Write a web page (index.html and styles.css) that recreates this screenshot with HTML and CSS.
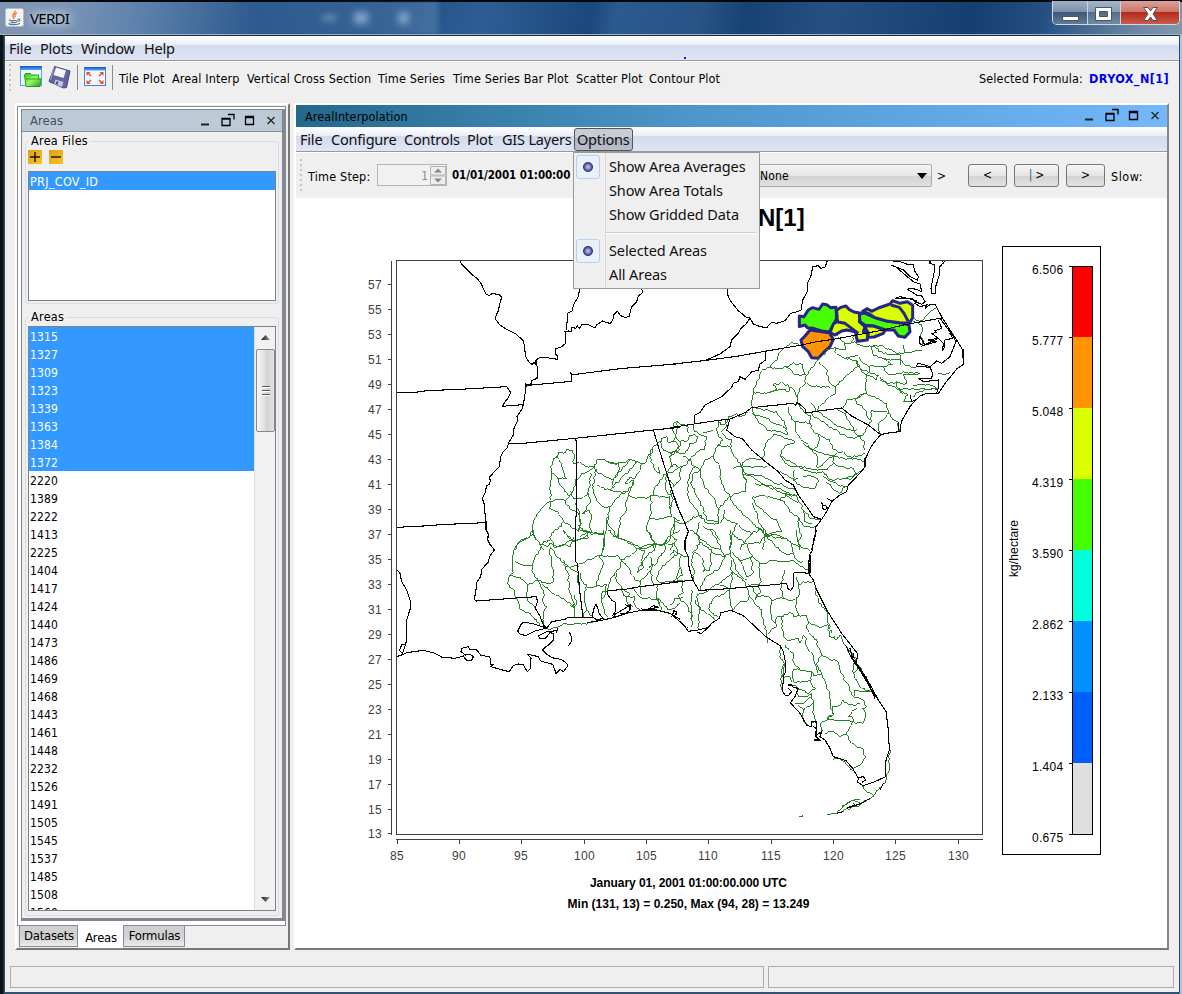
FILE: index.html
```html
<!DOCTYPE html>
<html lang="en">
<head>
<meta charset="utf-8">
<title>VERDI</title>
<link rel="stylesheet" href="styles.css">
<script src="map.js" defer></script>
</head>
<body>
<div class="frame">
  <header class="titlebar">
    <svg class="java" width="19" height="19" viewBox="0 0 19 19"><rect x=".5" y=".5" width="18" height="18" rx="2" fill="#f3f3f1" stroke="#b9bdc3"/><path d="M10 2.5C11 5 6.500 6 8 8.500C9 10 9.500 10 8.500 11M12 5C9 6.500 9.500 7.500 10.500 9" fill="none" stroke="#e08335" stroke-width="1.400"/><path d="M4.500 11.500C3 13 12 13 13 11.500M13 11C16 10.500 15 13.500 12.500 13.500M5.500 13.700C7 14.700 10 14.700 12 13.700M3.500 15.500C5 17 13 17 15 15.300" fill="none" stroke="#54758f" stroke-width="1.100"/></svg>
    <span class="app-name">VERDI</span>
    <div class="ghost"><i class="g1"></i><i class="g2"></i><i class="g3"></i></div>
    <div class="winbtns">
      <span class="wb"><svg width="34" height="24"><rect x="9.500" y="15.500" width="16" height="4" fill="#fff" stroke="#4b5563"/></svg></span>
      <span class="wb wmax"><svg width="32" height="24"><path d="M7.500 6.500h16v13h-16zM11.500 10.500v5h8v-5z" fill="#fff" stroke="#4b5563" fill-rule="evenodd"/></svg></span>
      <span class="wb close"><svg width="58" height="24"><path d="M22.500 6.500h4.500l2.500 3.500 2.500-3.500h4.500l-4.500 6.500 4.500 6.500h-4.500l-2.500-3.500-2.500 3.500h-4.500l4.500-6.500z" fill="#fff" stroke="#5d4a50"/></svg></span>
    </div>
  </header>
  <div class="client">
    <nav class="menubar main"><span>File</span><span>Plots</span><span>Window</span><span>Help</span><b class="speck"></b></nav>
    <div class="toolbar">
      <i class="grip"></i>
      <svg class="tools" width="92" height="26" viewBox="20 64 92 26">
        <defs><linearGradient id="blue" x1="0" y1="0" x2="0" y2="1"><stop offset="0" stop-color="#1156cf"/><stop offset="1" stop-color="#58a4f6"/></linearGradient><linearGradient id="leaf" x1="0" y1="0" x2="1" y2="1"><stop offset="0" stop-color="#35c21f"/><stop offset=".5" stop-color="#9df36d"/><stop offset="1" stop-color="#1aa50c"/></linearGradient></defs>
        <rect x="20.500" y="66.500" width="21" height="19" fill="#eef7ff" stroke="#57a0ec"/><rect x="20" y="66" width="22" height="4" fill="url(#blue)"/>
        <path d="M24.500 75l1-1.500h5l1 1.500h7v4h2.500l-1 7.500h-14z" fill="url(#leaf)" stroke="#24a015"/><path d="M26 79h15" stroke="#26b113"/>
        <path d="M54.500 66.500l15.500 4.500-3.500 16.500-3 .5-14.500-6.500 1-3z" fill="#6264a0" stroke="#454478"/><path d="M56 67.500l10 3-2.500 7.500-10-3z" fill="#f5f6fb"/><path d="M55.500 79.500l8 2.500-1.500 5-8-3z" fill="#c4c5de"/><path d="M57.500 81.500l-1 3" stroke="#484982" stroke-width="2"/><path d="M54 67l-3.500 13" stroke="#aaaad0"/>
        <path d="M77.500 65v25" stroke="#8b8b8b"/>
        <rect x="84.500" y="67.500" width="21" height="18" fill="#f3f8ff" stroke="#3f85dc"/><rect x="84" y="67" width="22" height="3.500" fill="url(#blue)"/>
        <path d="M86.500 72h4l-1.300 1.300 2.300 2.200-1 1-2.200-2.300-1.800 1.800zM103.500 72h-4l1.300 1.300-2.300 2.200 1 1 2.200-2.300 1.800 1.800zM86.500 84h4l-1.300-1.300 2.300-2.200-1-1-2.200 2.300-1.800-1.800zM103.500 84h-4l1.300-1.300-2.300-2.200 1-1 2.200 2.300 1.800-1.800z" fill="#ef4a1c"/>
      </svg>
      <i class="vsep"></i>
      <div class="plotbtns"><span>Tile Plot</span><span>Areal Interp</span><span>Vertical Cross Section</span><span>Time Series</span><span>Time Series Bar Plot</span><span>Scatter Plot</span><span>Contour Plot</span></div>
      <div class="formula"><span>Selected Formula:</span><b>DRYOX_N[1]</b></div>
    </div>
    <main class="desk">
      <section class="left">
        <div class="tabpane">
          <div class="dock">
            <div class="docktitle"><span>Areas</span>
              <svg class="wi" width="76" height="14"><path d="M1 11.500h8" stroke="#142814" stroke-width="2"/><path d="M22 5.500h8v7h-8zM22 6h8M28 1.500h6v5M45.500 3.500h8v8h-8zM45 4.500h9" fill="none" stroke="#000" stroke-width="1.300"/><path d="M67.500 4l7 7m0-7l-7 7" stroke="#142814" stroke-width="1.200"/></svg>
            </div>
            <div class="dockbody">
              <fieldset class="files"><legend>Area Files</legend>
                <div class="pm"><svg width="14" height="14"><path d="M2 7h10M7 2v10" stroke="#111" stroke-width="1.400"/></svg><svg width="14" height="14"><path d="M2 7h10" stroke="#111" stroke-width="1.400"/></svg></div>
                <div class="list filelist"><div class="sel">PRJ_COV_ID</div></div>
              </fieldset>
              <fieldset class="areas"><legend>Areas</legend>
                <div class="list arealist">
                  <div class="rows">
                    <div class="sel">1315</div><div class="sel">1327</div><div class="sel">1309</div><div class="sel">1323</div><div class="sel">1339</div><div class="sel">1363</div><div class="sel">1384</div><div class="sel">1372</div>
                    <div>2220</div><div>1389</div><div>2222</div><div>1413</div><div>2225</div><div>1404</div><div>1417</div><div>1424</div><div>1440</div><div>1473</div><div>1486</div><div>1469</div><div>1468</div><div>1443</div><div>1461</div><div>1448</div><div>2232</div><div>1526</div><div>1491</div><div>1505</div><div>1545</div><div>1537</div><div>1485</div><div>1508</div><div>1560</div>
                  </div>
                  <div class="scroll">
                    <svg width="19" height="22"><defs><linearGradient id="arr"><stop offset="0" stop-color="#111"/><stop offset="1" stop-color="#999"/></linearGradient></defs><path d="M5 13l4.500-5 4.500 5z" fill="url(#arr)"/></svg>
                    <div class="thumb"><i></i><i></i><i></i></div>
                    <svg class="down" width="19" height="22"><path d="M5 9h9l-4.500 5z" fill="url(#arr)"/></svg>
                  </div>
                </div>
              </fieldset>
            </div>
          </div>
        </div>
        <div class="tabs"><span>Datasets</span><span class="on">Areas</span><span>Formulas</span></div>
      </section>
      <section class="right">
        <div class="innertitle"><span>ArealInterpolation</span>
          <svg class="wi" width="76" height="14"><path d="M1 11.500h8" stroke="#142814" stroke-width="2"/><path d="M22 5.500h8v7h-8zM22 6h8M28 1.500h6v5M45.500 3.500h8v8h-8zM45 4.500h9" fill="none" stroke="#000" stroke-width="1.300"/><path d="M67.500 4l7 7m0-7l-7 7" stroke="#142814" stroke-width="1.200"/></svg>
        </div>
        <nav class="menubar inner"><span>File</span><span>Configure</span><span>Controls</span><span>Plot</span><span>GIS Layers</span><span class="open">Options</span></nav>
        <div class="controls">
          <i class="grip"></i><span class="tslabel">Time Step:</span>
          <div class="spinner"><span>1</span><svg width="16" height="19"><path d="M.5.500h15v8.500h-15zM.5 10h15v8.500h-15z" fill="#eee" stroke="#b5b5b8"/><path d="M4 6.500h8l-4-4zM4 12.500h8l-4 4z" fill="#888"/></svg></div>
          <b class="date">01/01/2001 01:00:00</b>
          <div class="combo"><span>None</span><svg width="10" height="6"><path d="M0 0h10l-5 6z"/></svg></div>
          <span class="gt">&gt;</span>
          <button class="b1">&lt;</button><button class="b2"><i>|</i>&gt;</button><button class="b3">&gt;</button>
          <span class="slow">Slow:</span>
        </div>
        <svg class="plot" width="871" height="750" viewBox="296 198 871 750">
          <text class="ttl" x="758" y="226">N[1]</text>
          <g class="polys" transform="translate(670 250) scale(.33333)">
            <path fill="#45ff00" d="M388 198L402 200 415 180 428 173 447 178 458 162 470 164 482 173 498 172 500 205 490 225 478 246 455 243 430 235 412 233 405 225 388 230z"/>
            <path fill="#ff9400" d="M420 240L440 243 478 248 490 268 480 290 460 308 445 325 425 323 415 305 398 290 393 270 405 258z"/>
            <path fill="#d9ff00" d="M500 181L512 172 528 168 537 178 552 186 574 190 568 215 585 230 580 245 595 252 592 270 562 274 556 245 530 240 515 243 495 255 480 248 490 222 502 214z"/>
            <path fill="none" d="M500 215L525 220 545 235 565 250"/>
            <path fill="#45ff00" d="M568 195L580 188 615 203 650 213 690 218 717 225 720 245 705 262 685 258 672 240 645 240 610 228 585 226 570 215z"/>
            <path fill="#d9ff00" d="M578 184L592 176 605 184 625 174 660 162 668 152 690 160 712 155 728 166 728 203 718 220 690 218 650 213 615 203 598 192z"/>
            <path fill="none" d="M663 165L688 172 702 190 715 215"/>
            <path fill="#d9ff00" d="M583 228L610 228 645 240 640 250 612 261 592 262 595 250z"/>
          </g>
          <g class="ws" transform="translate(380 250) scale(.33333)">
            <path d="M512 750L510 720 512 650 521 625 533 617 537 607 552 610 560 598 578 600 584 622 580 640 598 635 612 645 642 650 651 630 668 627 680 635 715 639 745 630 760 632 772 635 785 640 795 640 805 615 820 590 835 577 845 565 860 560 866 580 880 573 885 565 892 515"/>
            <path d="M533 617L545 640 560 685 540 686 530 680 512 665M530 680L548 712 568 738 556 752 527 748 512 755M568 738L580 720 585 690 605 670 625 665 645 650M570 722L580 745 610 742 624 728 632 670M642 650L650 660 643 690 641 730 650 750 665 768 688 770 702 755 720 735 740 725 762 693 745 700 735 700 750 680 765 685 785 640M645 660L670 675 700 690 703 710 690 720 675 720 650 705M668 627L700 640 715 639 718 660 705 680 700 690M690 720L720 725 738 725M750 632L720 665 705 685M772 635L745 670 720 690 695 715M762 693L745 733 738 755 740 775 735 790 722 800 720 825 717 865M624 728L632 755 615 790 605 790 630 780 634 800 630 835 643 850 672 855M688 770L683 815 700 840 717 865M683 800L680 840 672 870 672 900M745 733L775 743 810 738 820 735 825 710 840 690 850 675 860 673M820 735L845 740 870 740 875 800 835 808 808 808 812 770 812 738M808 808L798 830 810 850 825 880 828 895M720 865L750 875 790 895 825 880 848 885 862 865 880 850 885 820 880 800 900 812M860 673L858 720 875 740M845 570L850 600 880 605 893 595 892 580 875 572M820 590L812 635 840 670 835 650M860 673L895 655M880 605L868 620 875 650 862 665"/>
            <path d="M512 755L490 770 470 800 458 830 460 850 445 865 415 880 405 900M512 755L508 775 535 787 550 815 545 830 515 850 512 870 480 885 463 860 458 840M556 752L562 765 595 790 605 820 595 845 575 835 550 815M550 840L580 870 605 865 623 850 622 845 600 840 598 800 586 760M580 870L570 890 545 885 525 895 512 870M480 885L490 900M595 825L625 845 640 855M625 845L625 865 590 868"/>
          </g>
          <g class="ws" transform="translate(670 250) scale(.33333)">
            <path d="M728 205L755 212 765 200 780 185 798 175M730 215L755 225 758 240 750 255 760 270 755 290M388 285L365 278 330 305 322 330 300 352 275 362 270 385 255 410 247 440 248 473M300 352L330 355 347 350 370 338 398 345 407 375 390 378 370 370 347 352M445 330L430 350 410 375 407 400 385 430 380 460M445 335L472 360 480 400 495 410 497 430 465 455 440 485M410 400L440 408 480 412M250 425L290 430 320 418 308 405 335 395 355 405 357 425 330 418 300 430M355 405L375 425 385 445M445 330L470 300 495 290 525 300 525 280 555 275 570 285 605 290 630 285M495 290L500 310 525 325 560 330 570 355 590 378 590 430 560 445 530 450 520 475M525 325L560 315 590 345 640 350 650 370 685 372 700 365 745 365M560 330L565 350 545 365 520 390 495 410M570 355L625 375 620 390 590 378 600 350M605 290L610 315 640 325 670 345 640 350M640 325L690 330 705 345 745 350M630 285L665 300 690 315 690 345M610 285L640 310 700 310 755 300M630 380L650 400 680 395 710 400 700 375 750 370M680 395L685 415 725 415 760 415 805 417 780 405 730 405M700 430L655 405 630 390M590 430L620 445 650 462 655 490 685 515 690 545M655 490L640 510 625 520 632 554M590 430L555 448 585 480 600 510 605 480 650 485M790 417L750 425 728 440M685 415L715 435 700 455 725 452M805 370L840 367M555 255L545 275M500 255L525 280M700 285L705 310"/>
            <path d="M248 473L250 490 290 505 330 525 350 535 352 555 320 545 290 540 265 515 245 490M248 473L290 478 320 485 345 515 350 535M355 470L360 495 375 515 380 550 410 580 440 615 445 655M385 460L405 490 422 495 420 520 400 518 375 515M422 490L460 515 500 540 530 560 550 565 570 558 585 580 585 600M500 475L525 490 550 530 560 555 580 555 590 530 605 510M440 485L425 460M420 520L430 545 455 560 480 570 490 600 520 605 540 620 585 610M445 480L465 500 510 530 560 540M400 580L430 600 460 610 490 615 492 640 470 660 430 660 385 650 330 620 335 600 350 585 375 575M375 575L350 565 310 555 285 590 285 615 270 630 240 625 210 650 190 655M335 620L345 640 385 650 420 665 460 665 485 690 520 685 555 675 580 655M445 655L475 625 500 610M430 600L445 580 445 555M490 615L520 625 560 625 585 635M490 640L520 650 550 655 560 670 540 690 520 685M460 680L500 700 530 710 510 730 485 715 470 695M375 660L370 690 395 710 435 715 445 695 430 680 400 680M330 665L355 680 385 685M215 650L225 670 270 675 300 690 340 705 375 720M210 645L240 650 290 650M230 695L215 670 250 680 290 710 330 715 380 738M255 700L300 705 345 730 385 760M330 750L350 730 380 738 410 790 425 805 455 808M330 750L345 755 360 785 385 800 405 830 440 830M400 780L405 815 425 820M248 740L280 735 310 745 330 750M248 740L255 760 290 790 320 810 335 845 290 855 265 815 248 760M140 540L145 515 160 525 175 500 200 490 210 500 235 485M165 510L170 530 155 545M140 540L145 560 160 570 145 585 130 615 150 650 155 700 180 740 145 780 148 820 110 810 80 740 60 700 70 670 90 660 105 630 130 620M145 585L180 590 210 640 230 695 225 725 180 740M155 550L185 570 185 590M90 660L100 700 130 740 150 780M75 650L55 690 55 740 80 780 95 805M180 740L200 770 245 815 280 845M165 780L160 800 200 820 245 850 270 835 290 855 280 900M0 620L15 605 45 610 60 580 80 575 85 560 60 555 50 575 30 575 28 600 0 610M10 520L8 540 30 575M10 520L25 515 55 530 55 550M72 522L75 545 110 560 105 600 85 605 60 630 40 620M0 650L10 645 35 650 60 630 75 650 90 660M35 650L30 690 10 710 0 690M100 548L130 540M0 720L10 750 0 780M15 815L40 820 70 800 95 795 105 815 148 820M90 815L80 850 95 870 150 900M100 830L130 840 150 870M150 820L165 790M15 815L0 850 20 870 0 900M200 820L185 870 180 900M250 850L225 875 210 900M290 855L350 865 390 890M385 800L390 840 395 860 385 880 390 900"/>
          </g>
          <g class="ws" transform="translate(380 530) scale(.33333)">
            <path d="M458 0L450 20 420 35 405 55 400 70 400 130 385 145 382 160 405 185 410 205 425 240 450 250 470 270 485 290 500 296 530 293 550 280 580 283 640 276M458 0L480 42 505 48 510 40 530 50 575 30 582 20M405 95L430 105 457 105 465 80 480 60 480 42M457 105L463 135 475 150 500 160 520 155 515 110 508 60 515 50M390 135L420 142 443 165 475 150M443 165L440 200 465 235M475 150L495 195 485 210 500 230 490 250 495 290M515 55L540 85 570 115 595 130 598 165M550 90L565 130 570 190 583 220 580 230 545 205 515 190 485 160M555 110L585 105 598 110M583 220L585 240 570 225M582 195L590 215 585 262M550 0L575 28 590 40M600 130L605 150 620 165 615 200 620 240 640 258M620 170L660 168 680 165 675 195 665 215 673 240 685 262M598 100L620 90 645 80 660 77 672 40 670 0M660 77L670 100 660 130 650 168M660 77L690 80 710 75 725 90 720 115 705 130 690 155 683 182M725 90L745 110 765 150 780 155 815 115 812 80M725 90L770 60 765 50 720 25 700 20 685 0M770 55L795 60 785 90 790 115 770 130M770 55L800 45 825 40 825 60 795 85 775 125M800 0L825 40 860 40 875 15 900 0M860 30L855 60 830 100 800 120M865 45L885 40 895 70 875 85 840 120 830 150 850 158 885 150 900 115M815 115L820 165M710 130L710 155 725 172 730 195 765 200 765 225 780 240M760 172L780 200 835 205 845 240M780 155L785 195M725 172L750 190 740 215 760 230M715 0L715 25M835 205L870 240 900 220M835 165L830 185 840 225M620 240L610 260M683 182L665 190 665 215M600 20L625 5 670 10"/>
          </g>
          <g class="ws" transform="translate(670 530) scale(.33333)">
            <path d="M0 75L12 60 28 70 35 75 30 110 38 135 20 150 50 150M35 75L55 80M65 70L90 35 80 15 60 0M90 35L125 60 125 100 120 120 100 125 100 95 75 65 65 90 75 125 70 150M125 65L165 80 152 60 135 20 120 0M165 80L180 70 180 0M185 10L230 40 245 75 270 100 272 160M180 70L190 95 215 140 230 150M185 65L210 90 245 80 250 130 230 140 205 85M165 80L145 120 105 145 90 180M185 90L185 130 150 160 110 185 80 200 90 235 85 300M190 125L225 155 235 180 245 205 275 240 290 310M270 100L310 90 350 95 370 90 415 120M280 0L290 20 350 75 370 70 360 35 320 15 290 20M290 10L270 40 235 42M380 0L390 45 420 62M370 70L380 90 400 95M345 120L335 170 340 205 305 210 280 195 260 200 245 170M340 205L370 210 385 200 385 165 400 155 430 155M385 165L378 140M380 200L385 255 370 260 360 245 340 260 320 260 320 290 295 310M305 210L300 245 315 280M335 260L340 310 350 330 385 325 390 340 400 315 410 325 410 350 430 375 445 430M385 255L410 255 415 275 445 290 475 285 480 320 495 320 500 330 510 315 530 350 560 385M435 175L445 210 470 245 485 310M415 275L410 295 440 330 455 375 505 395 510 420 520 435 535 465 550 500M455 375L440 400 455 430 480 490 490 555 470 570 455 575 455 605M345 345L370 370 370 395 390 420 425 425 430 435 455 435M390 420L370 420 370 455 420 450 438 475 415 490 385 475 370 465M425 425L425 450M385 475L385 500 410 500 425 490 430 520 400 545 402 575 415 585M375 520L400 520 425 500M430 520L435 575 425 580M400 540L385 525M335 350L330 380 345 400 340 430 335 440 335 480M290 310L295 340M345 400L335 440 360 440 365 455M490 555L470 565 550 575 580 580 585 545 575 535 590 530 570 505 550 500 555 480 605 485M490 555L485 530 500 530 520 510 540 525 570 520M550 575L545 560 535 560 545 545 560 535M550 575L540 590 530 615 510 620 490 605 465 610M530 615L545 640 580 658 585 685 570 705 550 715M555 385L550 430 560 450 570 470 600 485M550 430L570 410 590 440M490 690L500 685 525 695 550 722M660 660L660 720 645 760 610 800 570 825 500 852M575 767L610 797M570 820L550 810 525 825 500 850 472 853M570 810L545 812 520 830M388 859L398 859 398 856M125 220L115 235 145 260M190 125L180 190 187 240M150 165L180 175 160 195 130 205 125 220M235 165L270 160 270 190 255 210M187 240L210 215 235 210 235 200M38 150L40 190 25 200 50 225 70 260 60 265M65 180L65 290M75 210L85 230 125 260 135 270M0 225L15 205 40 200"/>
          </g>
          <g class="bd" transform="translate(380 250) scale(.33333)">
            <path d="M241 32L244 42 262 60 275 73 292 86 303 100 312 120 319 134 328 136 338 130 358 135 365 142 358 165 356 180 347 200 348 210 360 225 378 237 405 250 430 272 434 290 436 318 448 338 456 343 462 338 468 345 468 330 480 322 500 323 532 328 532 318 526 312 528 296 545 290 557 280 555 245 565 243 575 245 575 232 588 235 592 228 598 236 605 224 625 224 645 234 650 224 668 213 680 218 692 220 700 205 700 195 712 184 722 197 735 202 747 200 755 170 770 155 775 138 788 128 785 117M599 117L595 140 580 165 577 182 563 190 562 215 558 225 560 240M468 338L472 350 471 385 455 392 452 405 437 402 438 410 434 440 430 463 427 475 411 500 412 515 402 535 400 555 385 580 383 592 370 605 362 620 358 650 343 665 330 680 328 687 332 690 328 703 319 707 317 725 307 745 312 760 315 790 318 815 318 840 325 850 323 868 330 885 343 898"/>
            <path d="M50 428L115 426 140 422 240 418 380 410 392 428 385 443 372 460 368 469 400 466 430 464M437 406L443 406 575 394 573 370 580 374 720 356 900 341M385 582L440 579 585 565 680 555 820 540 900 532M50 832L150 827 180 824 316 818M583 564L590 574 589 800 586 800 586 900M820 540L838 600 876 720 900 788"/>
          </g>
          <g class="bd" transform="translate(670 250) scale(.33333)">
            <path d="M0 343L110 331 200 319 290 303 395 285 440 275 490 268 640 240 700 225 815 204M173 117L173 135 183 155 205 182 230 203 240 204 250 222 270 230 290 233 305 217 320 220 345 212 362 190 385 184 393 180 398 150 412 125 413 98 424 75 428 50 445 47 452 55 465 52 472 32M240 204L228 222 213 235 205 250 185 270 180 290 150 312 120 325 107 331M287 303L287 330 270 342 265 360 245 366 225 388 210 380 205 395 190 400 185 412 155 440 120 457 105 465 90 487 75 495 73 522M0 533L72 522 145 511 180 507 225 488 245 473 370 460 378 466 380 458 388 461 405 477 408 489 440 484 515 474 545 498 595 525 632 554M180 507L170 540 195 560 217 566 245 600 290 638 325 665 345 690 370 705 385 735 410 770 430 800 455 808M0 703L20 765 43 815 55 845 45 870 44 900"/>
            <path d="M795 163L815 200 840 240 860 270 878 300 880 343 862 355 840 382 825 400 805 430 770 430 750 438 735 452 720 470 705 495 694 515 690 545 660 548 632 554 610 580 598 600 585 630 586 650 560 680 535 705 530 725 510 735 485 755 470 785 455 808 438 830 435 860 425 900M878 300h3v43h-3M686 515v30h-3M583 625v25h4M810 205L825 225 850 260 858 275 840 320 815 340 800 333 780 350 765 345 745 340 738 348 780 352 788 370 785 385 745 385 760 395 805 390 805 415 800 430M720 435L725 455 735 450M805 210L815 235 795 242 800 248 785 250 805 265 775 270 800 275 765 285 750 260 748 280 760 287 790 272 805 265 820 280 818 300 822 295 825 270 848 265 840 250 852 255M675 145L690 140 740 152 735 160 750 170 770 165 765 175 778 165 795 163M668 33L690 35 710 42 730 45 735 65 745 80 742 90 720 80 700 60 675 50 665 45 680 52 700 70 730 95 750 102 755 125 740 118 720 115 712 118 740 135 755 138 765 155 755 163 735 155 725 145 675 145M780 32L780 40 795 45 793 65 788 90 783 115 785 130 795 132 797 110 808 75 810 50 825 32M815 32L822 40M455 755L460 780 473 775 465 765 455 768M470 745L485 752"/>
          </g>
          <g class="bd" transform="translate(380 530) scale(.33333)">
            <path d="M319 0L325 15 323 30 330 42 343 60 328 80 326 95 306 117 302 140 290 157 288 180 283 208 290 213 410 204 470 200 472 215 466 235 480 258 490 285 500 294M586 0V95L592 100 600 190 609 262M683 182L735 178 780 170 900 155M683 182L684 195 695 210 706 217 706 245 697 258M50 118L60 130 65 155 80 180 92 215 92 232 80 270 79 335 68 370 58 362 65 345 76 343M50 380L65 375 80 368 130 361 165 370 185 381 225 385 250 378 258 390 275 391 280 380 270 373 257 375 243 365 245 355 265 350 270 358 290 360 303 376 328 380 333 390 331 405 340 403 332 410 360 418 388 425 400 407 415 402 430 405 442 425 452 415 453 385 443 373 475 380 482 393 518 403 528 430 540 418 550 425 563 408 560 400 543 388 515 383 497 370 488 360 495 352 505 345 520 330 520 310 510 308 497 324 480 325 475 318 500 305 530 302 534 296 528 310M500 294L455 280 430 277 423 283 413 303 420 312 438 317 465 303 500 294 515 275 555 268 565 262 580 263 637 262 640 240 648 222 655 240 658 252 670 265 650 270 640 262M700 265L705 253 735 235 750 225 750 240 735 252 720 250M735 222L745 230M568 305L574 320 574 335 565 347M900 268L870 250 830 240 790 240 740 250 700 263 660 272 620 278M782 236L800 240 820 227 838 232 808 236M878 257L880 245 888 243 890 255"/>
          </g>
          <g class="bd" transform="translate(670 530) scale(.33333)">
            <path d="M57 0L45 35 45 60 55 80 57 110 68 150 87 181M0 157L68 151M87 181L150 178 230 171 290 166 350 160 353 175 362 181 370 170 370 130 378 127 390 127 415 130M440 0L430 30 428 60 418 75 415 130 430 150 440 180 470 240 515 310 562 370 560 400 590 445 625 510 648 545 655 600 658 660 648 690 647 740 610 757 580 767 563 757 565 743 580 740 587 750 575 758M421 75v55M418 100v32M565 745L548 715 528 692 490 680 480 655 465 630 450 620 455 605 435 618 450 630 432 630M435 605L440 620 438 574 425 575 423 590 410 585 390 550 360 517M363 515L375 500 385 475 370 472 365 465 355 465M355 475L365 485 355 497 345 495 338 485 340 440 345 430 347 400 340 365 330 347 290 322 250 285 220 257 183 241 153 248 148 265 125 280 115 292 85 300 55 304 45 290 30 275 10 258M55 290L48 298M80 308L95 310 115 292M5 260L12 242 20 245 15 255M527 345L540 375 555 400M540 355L548 385M552 368L548 388 558 398M560 405L620 505M545 385L590 450 615 505M440 575L438 595 430 590M640 760L630 780M600 805L575 820 530 835 540 830 555 825 550 820M500 850L520 845"/>
          </g>
          <path class="ax" d="M396.500 260.500h586v573.500h-586zM391.500 260.500v574M396 839.500h587M388 284.500h3M388 309.500h3M388 334.500h3M388 359.500h3M388 384.500h3M388 409.500h3M388 434.500h3M388 459.500h3M388 484.500h3M388 509.500h3M388 534.500h3M388 559.500h3M388 584.500h3M388 609.500h3M388 634.500h3M388 659.500h3M388 684.500h3M388 709.500h3M388 734.500h3M388 759.500h3M388 784.500h3M388 809.500h3M388 833.500h3M397.500 840v4M459.500 840v4M521.500 840v4M584.500 840v4M646.500 840v4M708.500 840v4M771.500 840v4M833.500 840v4M895.500 840v4M958.500 840v4"/>
          <text class="num"><tspan x="368" y="289">57</tspan><tspan x="368" y="314">55</tspan><tspan x="368" y="339">53</tspan><tspan x="368" y="364">51</tspan><tspan x="368" y="389">49</tspan><tspan x="368" y="414">47</tspan><tspan x="368" y="439">45</tspan><tspan x="368" y="464">43</tspan><tspan x="368" y="489">41</tspan><tspan x="368" y="514">39</tspan><tspan x="368" y="539">37</tspan><tspan x="368" y="564">35</tspan><tspan x="368" y="589">33</tspan><tspan x="368" y="614">31</tspan><tspan x="368" y="639">29</tspan><tspan x="368" y="664">27</tspan><tspan x="368" y="689">25</tspan><tspan x="368" y="714">23</tspan><tspan x="368" y="739">21</tspan><tspan x="368" y="764">19</tspan><tspan x="368" y="789">17</tspan><tspan x="368" y="814">15</tspan><tspan x="368" y="838">13</tspan></text>
          <text class="num"><tspan x="390" y="860">85</tspan><tspan x="452" y="860">90</tspan><tspan x="514" y="860">95</tspan><tspan x="574" y="860">100</tspan><tspan x="636" y="860">105</tspan><tspan x="698" y="860">110</tspan><tspan x="761" y="860">115</tspan><tspan x="823" y="860">120</tspan><tspan x="885" y="860">125</tspan><tspan x="948" y="860">130</tspan></text>
          <text class="foot" x="590" y="887" textLength="197">January 01, 2001 01:00:00.000 UTC</text>
          <text class="foot" x="567.500" y="908" textLength="242">Min (131, 13) = 0.250, Max (94, 28) = 13.249</text>
          <rect class="bk" x="1002.500" y="246.500" width="98" height="608"/>
          <path fill="#f00" d="M1072 266h21v71h-21z"/><path fill="#ff9400" d="M1072 337h21v71h-21z"/><path fill="#d9ff00" d="M1072 408h21v71h-21z"/><path fill="#45ff00" d="M1072 479h21v71h-21z"/><path fill="#00ffdf" d="M1072 550h21v71h-21z"/><path fill="#0090ff" d="M1072 621h21v71h-21z"/><path fill="#0060ff" d="M1072 692h21v71h-21z"/><path fill="#dfdfdf" d="M1072 763h21v71h-21z"/>
          <path class="bk" d="M1072.500 266.500h20v568h-20zM1069 266.500h3M1069 337.500h3M1069 408.500h3M1069 479.500h3M1069 550.500h3M1069 621.500h3M1069 692.500h3M1069 763.500h3M1069 834.500h3"/>
          <text class="leg"><tspan x="1032" y="274">6.506</tspan><tspan x="1032" y="345">5.777</tspan><tspan x="1032" y="416">5.048</tspan><tspan x="1032" y="487">4.319</tspan><tspan x="1032" y="558">3.590</tspan><tspan x="1032" y="629">2.862</tspan><tspan x="1032" y="700">2.133</tspan><tspan x="1032" y="771">1.404</tspan><tspan x="1032" y="842">0.675</tspan></text>
          <text class="unit" transform="translate(1018 577) rotate(-90)" textLength="57">kg/hectare</text>
        </svg>
        <div class="menu">
          <div class="mi"><i class="radio"></i><span>Show Area Averages</span></div>
          <div class="mi"><span>Show Area Totals</span></div>
          <div class="mi"><span>Show Gridded Data</span></div>
          <hr>
          <div class="mi"><i class="radio"></i><span>Selected Areas</span></div>
          <div class="mi"><span>All Areas</span></div>
        </div>
      </section>
    </main>
    <footer class="status"><div></div><div></div></footer>
  </div>
</div>
</body>
</html>
```

FILE: styles.css
```css
* { box-sizing: border-box; }
body { margin: 0; font: 12px "DejaVu Sans Condensed", "DejaVu Sans", sans-serif; color: #000; overflow: hidden; }
svg { display: block; flex: none; }
span, b, legend { white-space: nowrap; }
.frame { width: 1182px; height: 994px; padding: 0 2px 1px 4px; display: flex; flex-direction: column; background: linear-gradient(90deg, #0c131b 0 3px, #35526b 4px, transparent 5px, transparent 1179px, #a4c9ea 1180px), linear-gradient(#65809e 0, #35506f 36px, #31516e 100%); }
.titlebar { height: 35px; margin: 0 -2px 0 -4px; padding-left: 5px; display: flex; align-items: flex-start; border-top: 2px solid #05070d; border-bottom: 1px solid #9fb2c8; background: linear-gradient(100deg, #7f94b3 0, #7e96b6 5%, #5d81ac 12%, #2c598d 22%, #235185 34%, #2d5d93 41%, #1b487b 50%, #2b5a8d 52%, #285486 59%, #164274 63%, #26507f 70%, #153f70 82%, #244f80 88%, #6b87a6 96%, #8197af 100%); }
.java { margin-top: 6px; }
.app-name { font: 15px/18px "Noto Sans", sans-serif; margin: 7px 0 0 6px; width: 42px; text-shadow: 0 0 7px #dce6f2, 0 0 12px #dce6f2; letter-spacing: -.7px; }
.ghost { width: 370px; height: 32px; display: flex; align-items: center; justify-content: flex-end; background: linear-gradient(90deg, transparent 45%, #5a83b055 80%, #6d94bd66 98%, transparent); filter: blur(1px); }
.ghost i { filter: blur(3px); background: #7ea2c6; height: 4px; width: 14px; margin-right: 18px; }
.ghost .g2 { height: 12px; margin-right: 30px; }
.ghost .g3 { height: 12px; width: 11px; margin-right: 33px; }
.winbtns { display: flex; margin-left: auto; margin-right: 2px; margin-top: -1px; border: 1px solid #d1dae4; border-top: 0; border-radius: 0 0 5px 5px; overflow: hidden; }
.wb { height: 23px; border-right: 1px solid #cbd3dd; background: linear-gradient(#9fb0c4 0, #7c91aa 46%, #3d5876 48%, #5e7c99 100%); }
.wb.wmax { background: linear-gradient(#a6b6c9 0, #8a9db4 46%, #526e8a 48%, #718ba5 100%); }
.wb.close { border: 0; background: linear-gradient(#dca19b 0, #cf766c 46%, #b32a1a 48%, #c95b48 100%); }
.client { flex: 1; display: flex; flex-direction: column; background: #efefef; border: 1px solid #38475a; border-top-color: #1c2c42; border-bottom-color: #31516e; }
.menubar { display: grid; font: 14.500px/17px "Noto Sans", sans-serif; background: linear-gradient(#fff 0, #e9eef6 9px, #d2daec 9px, #e0e6f4 100%); border-bottom: 1px solid #999; letter-spacing: -.2px; color: #111; }
.menubar.main { height: 25px; padding: 4px 0 0 4px; grid-template-columns: 31px 41px 63px 540px 10px; }
.speck { width: 2px; height: 2px; background: #1010ff; align-self: end; margin: 0 0 1px; }
.toolbar { height: 42px; border-top: 1px solid #fff; display: flex; padding-left: 4px; }
.grip { width: 3px; height: 28px; margin-top: 2px; background: repeating-linear-gradient(#c4c4c4 0 2px, transparent 2px 5px); background-size: 2px 100%; background-repeat: no-repeat; }
.tools { margin: 2px 0 0 8px; }
.vsep { width: 1px; height: 25px; background: #8b8b8b; margin-top: 3px; }
.plotbtns { display: grid; grid-template-columns: 53px 75px 131px 75px 123px 73px 71px; margin: 8px 0 0 6px; line-height: 17px; font-size: 12.500px; letter-spacing: .12px; }
.formula { margin: 8px 10px 0 auto; line-height: 17px; display: flex; gap: 6px; font-size: 12.500px; letter-spacing: .15px; }
.formula b { color: #0000f0; letter-spacing: .4px; }
.desk { height: 847px; display: flex; padding-left: 10px; gap: 4px; }
.left { width: 275px; border-left: 2px solid #fff; border-top: 2px solid #fff; border-right: 2px solid #777; border-bottom: 2px solid #777; }
.tabpane { height: 820px; margin: 1px 2px 0 0; border: 1px solid #888b93; background: #fff; padding: 2px 0 4px 3px; }
.dock { height: 812px; border: 1px solid #83858d; border-right: 3px solid #85878f; border-bottom: 3px solid #85878f; background: #efefef; }
.docktitle { height: 22px; background: #bccad8; display: flex; justify-content: space-between; padding: 2px 6px 0 8px; color: #42505e; line-height: 17px; border-bottom: 1px solid #8a8d96; font-size: 13px; }
.docktitle .wi { margin-top: 1px; }
.dockbody { padding: 2px 3px 0; }
fieldset { margin: 0; padding: 0 2px; border: 1px solid #d5dde8; border-radius: 3px; min-width: 0; }
legend { padding: 0 2px; margin-left: 1px; line-height: 14px; font-size: 12.500px; letter-spacing: .3px; }
.files { height: 170px; }
.pm { display: flex; gap: 7px; height: 23px; padding-top: 2px; }
.pm svg { background: linear-gradient(135deg, #e29e1c, #f6c51b); }
.list { border: 1px solid #7b8089; background: #fff; line-height: 18px; overflow: hidden; }
.list .sel { background: #3399ff; color: #fff; }
.filelist { height: 130px; }
.filelist div { height: 18px; padding-left: 1px; line-height: 20px; font-size: 12.500px; letter-spacing: .3px; }
.areas { margin-top: 6px; height: 606px; }
.arealist { height: 585px; margin-top: 2px; display: flex; }
.rows { width: 225px; letter-spacing: .14px; }
.rows div { height: 18px; padding-left: 1px; line-height: 20px; }
.scroll { margin-left: auto; width: 21px; padding: 0 1px; background: #f1f1f1; border-left: 1px solid #ddd; display: flex; flex-direction: column; }
.thumb { height: 83px; width: 19px; border: 1px solid #888; border-radius: 2px; background: linear-gradient(90deg, #f7f7f7, #e3e3e5 40%, #d1d2d4 60%, #e2e2e2); display: flex; flex-direction: column; gap: 2px; align-items: center; justify-content: center; }
.thumb i { width: 8px; height: 2px; border-top: 1px solid #555; border-bottom: 1px solid #fff; }
.down { margin-top: auto; }
.tabs { display: flex; padding-left: 2px; font-size: 13px; letter-spacing: -.25px; }
.tabs span { height: 21px; line-height: 20px; border: 1px solid #888b93; border-top: 0; background: linear-gradient(#d0d0d0 0 10px, #ececec 20px); width: 59px; padding-left: 1px; text-align: center; }
.tabs .on { height: 24px; line-height: 25px; width: 45px; background: #fff; margin-top: -1px; border-left: 0; border-right: 0; }
.tabs span:last-child { width: 62px; }
.right { position: relative; width: 875px; border: 2px solid #fff; border-right-color: #868686; border-bottom: 2px solid #777; background: #fff; display: flex; flex-direction: column; }
.innertitle { height: 22px; background: linear-gradient(90deg, #23698c, #4f96ca 46%, #74b7fb 100%); display: flex; justify-content: space-between; padding: 3px 7px 0 9px; line-height: 18px; font-size: 12.500px; letter-spacing: .1px; }
.menubar.inner { height: 25px; padding: 4px 0 0 4px; grid-template-columns: 31px 73px 63px 35px 72px 59px; }
.menubar .open { height: 23px; margin-top: -3px; border: 1px solid #555; border-radius: 3px; background: linear-gradient(#c8ccd4 0 9px, #afb5c1 9px, #b9bfca); padding: 2px; }
.controls { height: 46px; border-top: 1px solid #fff; background: #efefef; display: flex; align-items: flex-start; padding: 0 0 0 4px; line-height: 17px; }
.controls .grip { height: 34px; margin-top: 6px; }
.tslabel { margin: 15px 0 0 5px; width: 69px; font-size: 12.500px; letter-spacing: .2px; }
.spinner { width: 70px; height: 22px; margin-top: 11px; border: 1px solid #b5b5b8; display: flex; justify-content: flex-end; gap: 2px; padding: 1px 0 0; color: #8b8b8b; line-height: 20px; background: #f1f1f1; }
.date { margin: 14px 0 0 5px; width: 119px; font-size: 11.500px; letter-spacing: -.1px; }
.combo { margin: 11px 0 0 60px; width: 301px; height: 23px; border: 1px solid #aaa; border-radius: 2px; background: linear-gradient(#f4f4f4 0, #e6e6e6 50%, #d2d2d2 52%, #e1e1e1); display: flex; justify-content: space-between; align-items: center; padding: 1px 4px 0 128px; letter-spacing: .2px; }
.gt { margin: 15px 0 0 5px; width: 31px; }
button { font: inherit; height: 23px; margin: 11px 7px 0 0; padding: 0; border: 1px solid #777; border-radius: 3px; background: linear-gradient(#f6f6f6, #e5e5e5 50%, #d2d2d2 52%, #e2e2e2); }
.b1, .b3 { width: 39px; }
.b2 { width: 45px; }
.b2 i { font-style: normal; color: #1d63a8; margin-right: 3px; }
.b3 { margin-right: 6px; }
.slow { margin-top: 15px; font-size: 12.500px; letter-spacing: .5px; }
.menu { position: absolute; left: 277px; top: 47px; width: 187px; height: 137px; background: linear-gradient(90deg, transparent 31px, #d8d8d8 31px 32px, transparent 32px), #efefef; border: 1px solid #999; padding: 2px 3px; font: 14.500px/22px "Noto Sans", sans-serif; letter-spacing: -.1px; color: #111; }
.mi { height: 24px; display: flex; justify-content: flex-start; }
.mi span { margin-left: auto; width: 147px; }
.radio { width: 24px; height: 24px; margin-left: -1px; margin-right: -24px; border: 1px solid #b4d0f3; border-radius: 3px; background: radial-gradient(circle at 11px 11px, #d0d0ee 0, #6b6bb0 3px, #35357c 4.500px, transparent 5.400px), #eaf0f8; }
.menu hr { height: 2px; border: 0; border-top: 1px solid #ccc; border-bottom: 1px solid #fff; margin: 5px 0 5px 29px; }
.ttl { font: bold 24px "Liberation Sans", sans-serif; }
.polys path { stroke: #262688; stroke-width: 9; stroke-linejoin: round; }
.ws path, .bd path { fill: none; stroke: #258325; stroke-width: 3; shape-rendering: crispEdges; }
.bd path { stroke: #000; stroke-width: 3.200; }
.ax { fill: none; stroke: #404040; shape-rendering: crispEdges; }
.bk { fill: none; stroke: #000; shape-rendering: crispEdges; }
.num { font: 12px "Liberation Sans", sans-serif; letter-spacing: .3px; fill: #404040; }
.leg { font: 12px "Liberation Sans", sans-serif; letter-spacing: .3px; }
.foot { font: bold 12px "Liberation Sans", sans-serif; }
.unit { font: 12px "Liberation Sans", sans-serif; }
.status { display: grid; grid-template-columns: 754px 406px; gap: 4px; padding: 16px 0 0 5px; }
.status div { height: 22px; border: 1px solid #aaacb0; }
```

FILE: map.js
```js
// Roughens the watershed outlines so that river boundaries meander between their vertices.
let seed = 7;
function rnd() {
  seed = (seed * 16807) % 2147483647;
  return seed / 2147483647 - 0.5;
}
document.querySelectorAll('.ws path').forEach(function (path) {
  const out = path.getAttribute('d').split('M').filter(Boolean).map(function (sub) {
    const n = sub.match(/-?[\d.]+/g).map(Number);
    let d = 'M' + n[0] + ' ' + n[1];
    for (let i = 2; i + 1 < n.length; i += 2) {
      const dx = n[i] - n[i - 2], dy = n[i + 1] - n[i - 1];
      const len = Math.hypot(dx, dy);
      const steps = Math.max(1, Math.round(len / 7));
      for (let k = 1; k < steps; k++) {
        const t = k / steps;
        const off = rnd() * 6 + Math.sin(t * Math.PI) * Math.min(len, 40) * 0.06;
        d += 'L' + (n[i - 2] + dx * t - dy / len * off).toFixed(1) + ' ' + (n[i - 1] + dy * t + dx / len * off).toFixed(1);
      }
      d += 'L' + n[i] + ' ' + n[i + 1];
    }
    return d;
  });
  path.setAttribute('d', out.join(''));
});
```
